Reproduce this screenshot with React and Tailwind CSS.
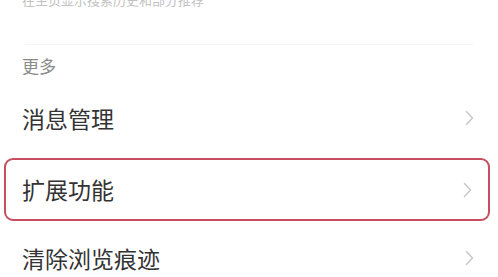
import React from 'react';

const Chevron = () => (
  <svg width="9" height="16" viewBox="0 0 9 16" fill="none">
    <polyline points="1.5,1.5 7.5,8 1.5,14.5" stroke="#c8c8c8" strokeWidth="1.5" strokeLinecap="round" strokeLinejoin="round" />
  </svg>
);

const Row = ({ label }) => (
  <div className="flex items-center justify-between h-full pl-[22px] pr-[24px]">
    <span className="text-[23px] text-[#333] leading-none">{label}</span>
    <Chevron />
  </div>
);

const App = () => {
  return (
    <div
      className="w-[498px] h-[277px] bg-white overflow-hidden"
      style={{ fontFamily: '"Noto Sans CJK SC", "Noto Sans", sans-serif' }}
    >
      {/* cut-off subtitle from previous section */}
      <p className="-mt-[8px] pl-[22px] text-[13px] leading-[16px] text-[#c2c2c2]">在主页显示搜索历史和部分推荐</p>

      <div className="mt-[36px] mx-[25px] h-px bg-[#f5f5f5]" />

      <p className="mt-[10px] pl-[22px] text-[17px] leading-[22px] text-[#8a8a8a]">更多</p>

      <div className="mt-[6px] h-[70px]">
        <Row label="消息管理" />
      </div>

      <div className="h-[70px] pt-[5px] pb-[2px] pl-[4px] pr-[8px]">
        <div className="h-full border-2 border-[#c64e5e] rounded-[9px]">
          <div className="flex items-center justify-between h-full pl-[16px] pr-[16px]">
            <span className="text-[23px] text-[#333] leading-none">扩展功能</span>
            <Chevron />
          </div>
        </div>
      </div>

      <div className="h-[70px]">
        <Row label="清除浏览痕迹" />
      </div>
    </div>
  );
};

export default App;
